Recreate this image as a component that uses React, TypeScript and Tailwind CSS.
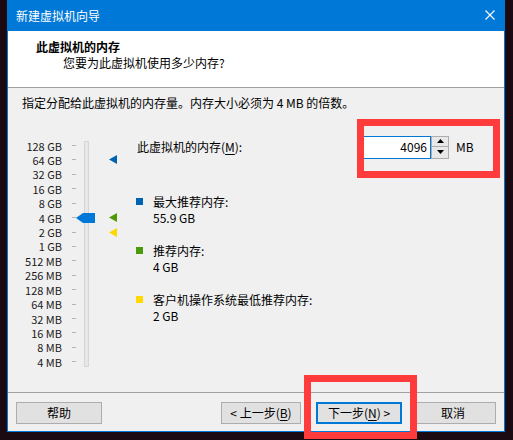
import React from "react";

const SIZES = [
  "128 GB", "64 GB", "32 GB", "16 GB", "8 GB", "4 GB", "2 GB", "1 GB",
  "512 MB", "256 MB", "128 MB", "64 MB", "32 MB", "16 MB", "8 MB", "4 MB",
];

// markers next to the track, by row index
const MARKERS: Record<number, string> = { 1: "#0063b1", 5: "#4e9a06", 6: "#ffd800" };

function Tri({ color }: { color: string }) {
  return (
    <svg width="8" height="9" viewBox="0 0 8 9">
      <polygon points="0,4.5 8,0 8,9" fill={color} />
    </svg>
  );
}

function Legend({ color, title, value }: { color: string; title: string; value: string }) {
  return (
    <div className="flex">
      <div className="h-[15.5px] flex items-center">
        <div className="w-[7px] h-[7px] mr-[10px]" style={{ background: color }} />
      </div>
      <div className="leading-[15.5px]">
        <div>{title}</div>
        <div>{value}</div>
      </div>
    </div>
  );
}

function Btn({ children, w, primary }: { children: React.ReactNode; w: string; primary?: boolean }) {
  return (
    <div
      className={
        "h-[22px] flex items-center justify-center bg-[#e1e1e1] text-black " +
        w +
        (primary ? " border-2 border-[#0078d7]" : " border border-[#adadad]")
      }
    >
      {children}
    </div>
  );
}

export default function App() {
  return (
    <div className="relative w-[513px] h-[440px] bg-[#1c0a12] overflow-hidden text-[12px] text-black font-['Noto_Sans_CJK_SC','Noto_Sans',sans-serif]">
      {/* window */}
      <div className="ml-[7px] w-[498px] h-[432px] bg-[#0078d7] px-[1px] pb-[1px] flex flex-col">
        {/* title bar */}
        <div className="h-[31px] shrink-0 flex items-center justify-between pl-[8px] pr-[9px] text-white">
          <span className="leading-[16px]">新建虚拟机向导</span>
          <svg width="10" height="10" viewBox="0 0 10 10" className="mt-[-1px]">
            <path d="M0.5 0.5 L9.5 9.5 M9.5 0.5 L0.5 9.5" stroke="#fff" strokeWidth="1.1" />
          </svg>
        </div>

        {/* header */}
        <div className="h-[57px] shrink-0 bg-white border-b border-[#a0a0a0] pt-[7.5px]">
          <div className="pl-[28px] font-bold leading-[16px]">此虚拟机的内存</div>
          <div className="pl-[55px] leading-[16px]">您要为此虚拟机使用多少内存?</div>
        </div>

        {/* body */}
        <div className="flex-1 bg-[#f0f0f0] flex flex-col">
          <div className="pt-[7px] pl-[14px] leading-[16px]">
            指定分配给此虚拟机的内存量。内存大小必须为 4 MB 的倍数。
          </div>

          <div className="flex-1 flex mt-[24px]">
            {/* slider scale */}
            <div className="flex pt-[3.3px]">
              <div className="flex flex-col">
                {SIZES.map((s) => (
                  <div key={s} className="h-[14.43px] flex items-center">
                    <span className="w-[54px] text-right text-[11px] leading-[12px] text-[#1a1a1a]">{s}</span>
                    <span className="ml-[10px] w-[4px] h-[1px] bg-[#b4b4b4]" />
                  </div>
                ))}
              </div>
              <div className="relative ml-[8px] w-[5px]">
                <div className="mt-[2.7px] h-[226px] w-[5px] bg-[#e7e7e7] border border-[#d6d6d6]" />
                <svg
                  width="19"
                  height="10"
                  viewBox="0 0 19 10"
                  className="absolute left-[-8px] top-[75.1px]"
                >
                  <polygon points="0,5 7,0 19,0 19,10 7,10" fill="#0078d7" />
                </svg>
              </div>
              <div className="flex flex-col ml-[20px]">
                {SIZES.map((s, i) => (
                  <div key={s} className="h-[14.43px] w-[8px] flex items-center">
                    {MARKERS[i] && <Tri color={MARKERS[i]} />}
                  </div>
                ))}
              </div>
            </div>

            {/* right side */}
            <div className="ml-[19px] flex flex-col">
              <div className="flex items-center h-[23px] mt-[0.5px]">
                <span className="w-[228px] pl-[1px] leading-[16px]">
                  此虚拟机的内存(<span className="underline underline-offset-2">M</span>):
                </span>
                <div className="w-[67px] h-[23px] bg-white border-y border-r border-[#0078d7] flex items-center justify-end pr-[3px]">
                  4096
                </div>
                <div className="w-[18px] h-[23px] flex flex-col">
                  <div className="h-[11.5px] bg-[#e8e8e8] border border-[#adadad] flex items-center justify-center">
                    <svg width="7" height="4" viewBox="0 0 7 4">
                      <polygon points="0,4 3.5,0 7,4" fill="#000" />
                    </svg>
                  </div>
                  <div className="h-[11.5px] bg-[#e8e8e8] border border-t-0 border-[#adadad] flex items-center justify-center">
                    <svg width="7" height="4" viewBox="0 0 7 4">
                      <polygon points="0,0 7,0 3.5,4" fill="#000" />
                    </svg>
                  </div>
                </div>
                <span className="ml-[7px]">MB</span>
              </div>

              <div className="mt-[35.5px] flex flex-col gap-[18px]">
                <Legend color="#0063b1" title="最大推荐内存:" value="55.9 GB" />
                <Legend color="#4b9a0e" title="推荐内存:" value="4 GB" />
                <Legend color="#ffd800" title="客户机操作系统最低推荐内存:" value="2 GB" />
              </div>
            </div>
          </div>

          {/* buttons */}
          <div className="h-[39px] shrink-0 border-t border-[#a0a0a0] pt-[9px] px-[8px] flex">
            <Btn w="w-[86px]">帮助</Btn>
            <div className="ml-auto flex gap-[15px]">
              <Btn w="w-[80px]">
                &lt; 上一步(<span className="underline underline-offset-2">B</span>)
              </Btn>
              <Btn w="w-[86px]" primary>
                下一步(<span className="underline underline-offset-2">N</span>) &gt;
              </Btn>
            </div>
            <div className="ml-[8px]">
              <Btn w="w-[86px]">取消</Btn>
            </div>
          </div>
        </div>
      </div>

      {/* red annotation boxes */}
      <div className="absolute left-[357px] top-[119px] w-[143px] h-[59px] border-[7px] border-[#ff3b3b]" />
      <div className="absolute left-[304px] top-[375px] w-[113px] h-[64px] border-[7px] border-[#ff3b3b]" />
    </div>
  );
}
